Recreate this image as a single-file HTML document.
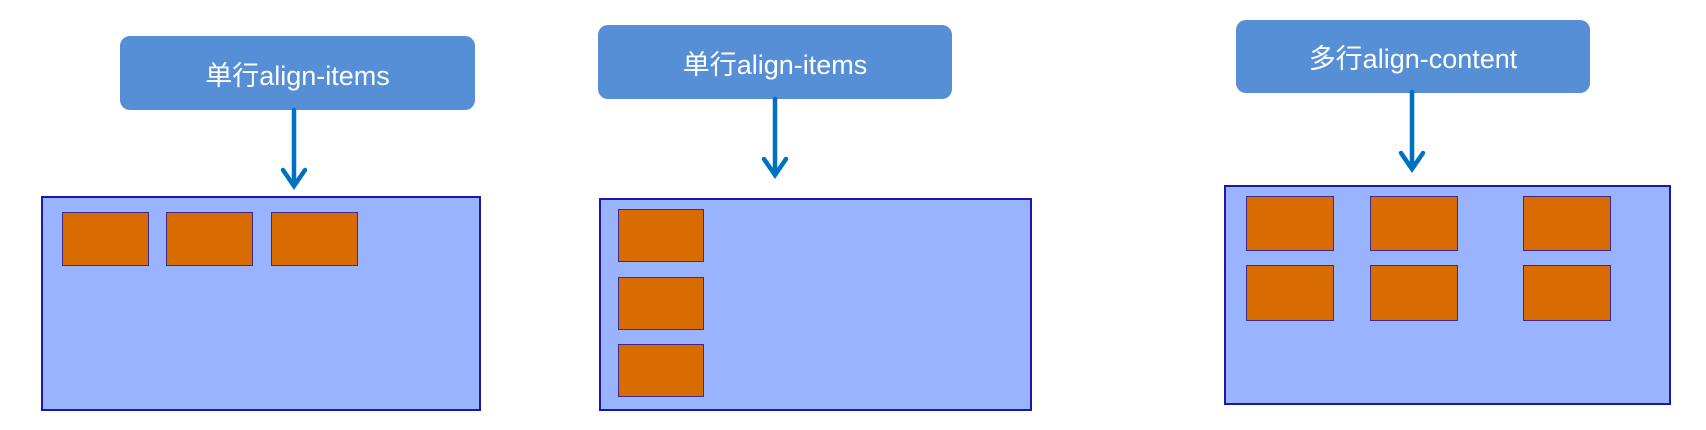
<!DOCTYPE html><html><head><meta charset="utf-8"><style>
body{margin:0;width:1706px;height:430px;background:#fff;position:relative;overflow:hidden;font-family:"Liberation Sans","Noto Sans CJK SC",sans-serif}
.b{position:absolute;background:#568fd6;border-radius:10px;color:#fff;font-size:27px;display:flex;align-items:center;justify-content:center}
.c{position:absolute;background:#99b3ff;border:2px solid #1b17a8;box-sizing:border-box}
.i{position:absolute;background:#d86c00;border:1.5px solid #3b2a8c;box-sizing:border-box}
svg{position:absolute;left:0;top:0}
</style></head><body>
<div class="b" style="left:120px;top:36px;width:355px;height:74px">单行align-items</div>
<div class="b" style="left:598px;top:25px;width:354px;height:74px">单行align-items</div>
<div class="b" style="left:1236px;top:20px;width:354px;height:73px">多行align-content</div>
<svg width="1706" height="430" fill="none" stroke="#0070c0" stroke-width="4.5" stroke-linecap="round">
<path d="M294 110V186M283 170L294 186L305 170"/>
<path d="M775 99V175M764 159L775 175L786 159"/>
<path d="M1412 92V169M1401 153L1412 169L1423 153"/>
</svg>
<div class="c" style="left:41px;top:196px;width:440px;height:215px"></div>
<div class="i" style="left:62px;top:212px;width:87px;height:54px"></div>
<div class="i" style="left:166px;top:212px;width:87px;height:54px"></div>
<div class="i" style="left:271px;top:212px;width:87px;height:54px"></div>
<div class="c" style="left:599px;top:198px;width:433px;height:213px"></div>
<div class="i" style="left:618px;top:209px;width:86px;height:53px"></div>
<div class="i" style="left:618px;top:277px;width:86px;height:53px"></div>
<div class="i" style="left:618px;top:344px;width:86px;height:53px"></div>
<div class="c" style="left:1224px;top:185px;width:447px;height:220px"></div>
<div class="i" style="left:1246px;top:196px;width:88px;height:55px"></div>
<div class="i" style="left:1370px;top:196px;width:88px;height:55px"></div>
<div class="i" style="left:1523px;top:196px;width:88px;height:55px"></div>
<div class="i" style="left:1246px;top:265px;width:88px;height:56px"></div>
<div class="i" style="left:1370px;top:265px;width:88px;height:56px"></div>
<div class="i" style="left:1523px;top:265px;width:88px;height:56px"></div>
</body></html>
